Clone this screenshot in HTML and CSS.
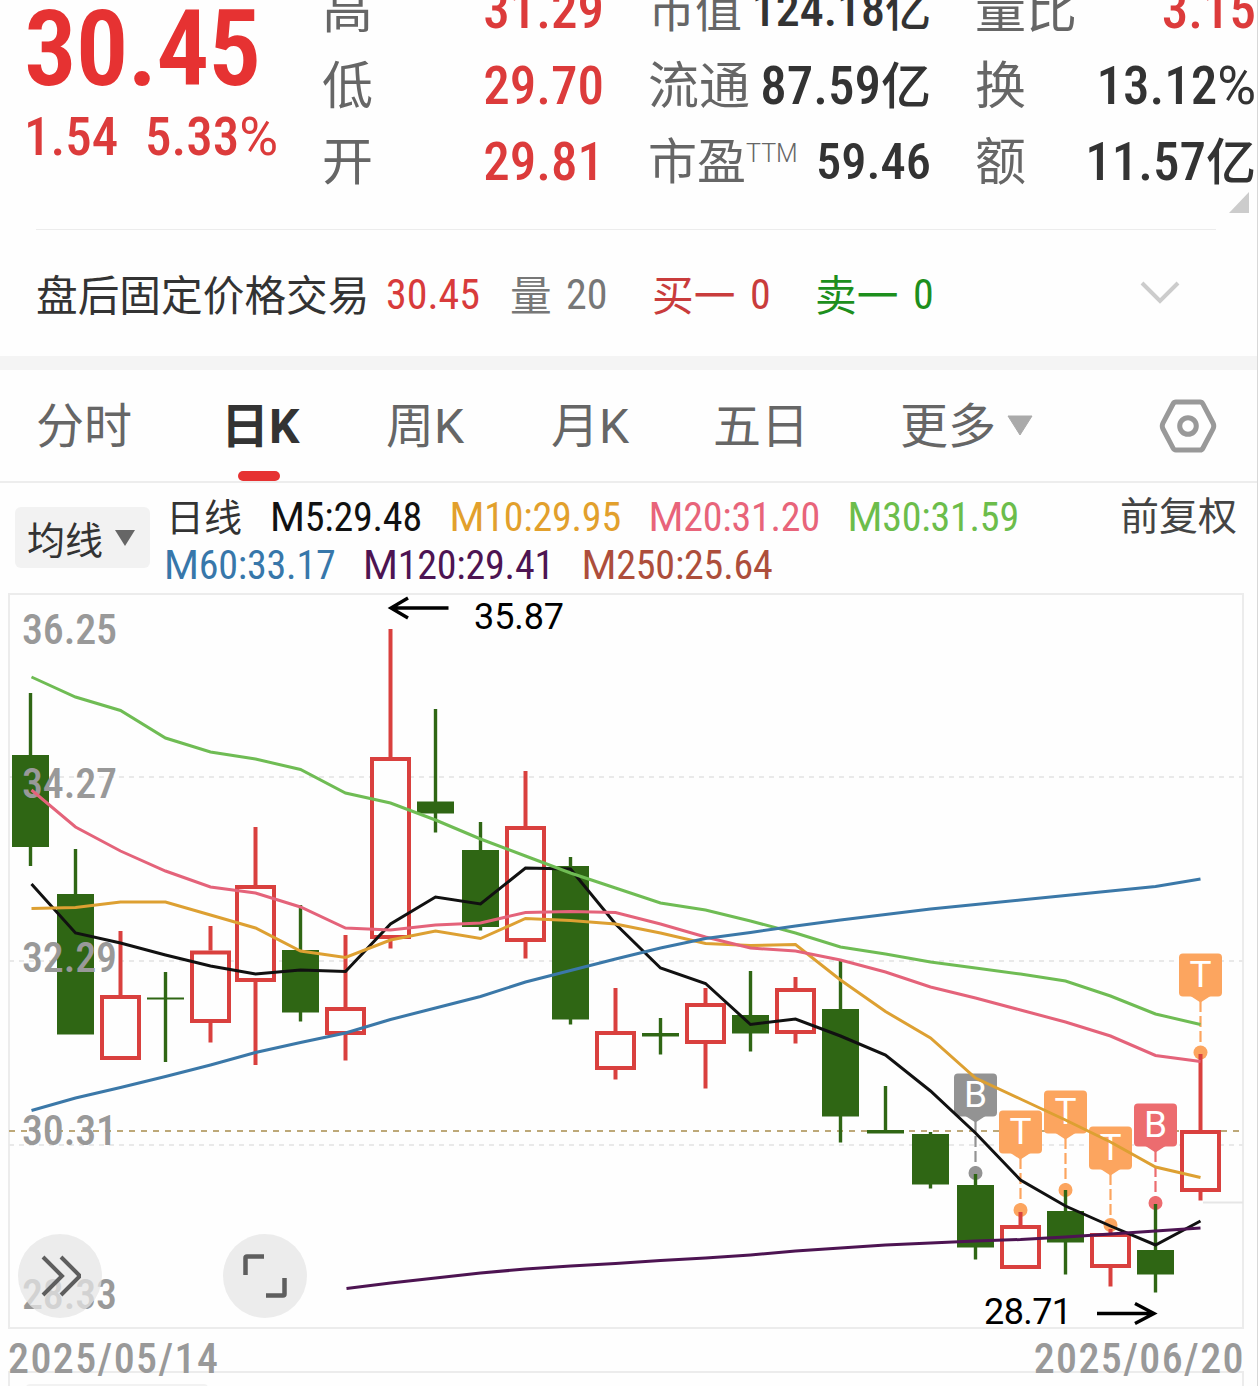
FILE: index.html
```html
<!doctype html>
<html lang="zh-CN">
  <head>
    <meta charset="UTF-8" />
    <meta name="viewport" content="width=device-width, initial-scale=1.0" />
    <title>日K</title>
    <link rel="stylesheet" href="styles.css">
  </head>
  <body>
    <!-- Quote -->
    <div class="quote">
      <div class="price-box">
        <div class="price">30.45</div>
        <div class="change"><span class="diff">1.54</span><span>5.33<b>%</b></span></div>
      </div>
      <div class="stats">
        <div class="stat"><span class="label">高</span><span class="value up">31.29</span></div>
        <div class="stat tight"><span class="label">市值</span><span class="value">124.18<i>亿</i></span></div>
        <div class="stat"><span class="label">量比</span><span class="value up">3.15</span></div>
        <div class="stat"><span class="label">低</span><span class="value up">29.70</span></div>
        <div class="stat"><span class="label">流通</span><span class="value">87.59<i>亿</i></span></div>
        <div class="stat"><span class="label">换</span><span class="value">13.12<b>%</b></span></div>
        <div class="stat"><span class="label">开</span><span class="value up">29.81</span></div>
        <div class="stat pe"><span class="label">市盈<sup>TTM</sup></span><span class="value">59.46</span></div>
        <div class="stat"><span class="label">额</span><span class="value">11.57<i>亿</i></span></div>
      </div>
      <svg class="corner" width="20" height="21" viewBox="0 0 20 21"><path d="M20 0V21H0Z" fill="#ccc"/></svg>
    </div>

    <!-- After hours -->
    <div class="after">
      <span class="after-title">盘后固定价格交易</span>
      <span class="num after-price">30.45</span>
      <span class="after-vol">量</span><span class="num after-volnum">20</span>
      <span class="bid">买一</span><span class="num bid-num">0</span>
      <span class="ask">卖一</span><span class="num ask-num">0</span>
      <svg class="chevron" width="40" height="24" viewBox="0 0 40 24"><path d="M2 2L20 20L38 2" fill="none" stroke="#ccc" stroke-width="4"/></svg>
    </div>

    <!-- Tabs -->
    <div class="tabs">
      <div class="tab">分时</div>
      <div class="tab active">日K</div>
      <div class="tab">周K</div>
      <div class="tab">月K</div>
      <div class="tab">五日</div>
      <div class="tab">更多<svg width="26" height="21" viewBox="0 0 26 21"><path d="M1 1H25L13 20Z" fill="#aaa" stroke="#aaa" stroke-linejoin="round"/></svg></div>
      <svg class="setting" width="58" height="56" viewBox="0 0 58 56"><path d="M17 4H41Q43 4 44 6L54 25Q55.5 28 54 31L44 50Q43 52 41 52H17Q15 52 14 50L4 31Q2.500 28 4 25L14 6Q15 4 17 4Z" fill="none" stroke="#999" stroke-width="5"/><circle cx="29" cy="28" r="8.300" fill="none" stroke="#999" stroke-width="5"/></svg>
    </div>

    <!-- Moving averages -->
    <div class="ma-bar">
      <div class="ma-btn">均线<svg width="20" height="16" viewBox="0 0 20 16"><path d="M0 0H20L10 16Z" fill="#666"/></svg></div>
      <div class="ma-list">
        <div class="ma-row">
          <span class="ma-name">日线</span>
          <span class="ma ma5"><b>M</b>5:29.48</span>
          <span class="ma ma10"><b>M</b>10:29.95</span>
          <span class="ma ma20"><b>M</b>20:31.20</span>
          <span class="ma ma30"><b>M</b>30:31.59</span>
        </div>
        <div class="ma-row">
          <span class="ma ma60"><b>M</b>60:33.17</span>
          <span class="ma ma120"><b>M</b>120:29.41</span>
          <span class="ma ma250"><b>M</b>250:25.64</span>
        </div>
      </div>
      <div class="adjust">前复权</div>
    </div>

    <!-- Chart -->
    <div class="chart">
      <svg id="kline" width="1258" height="738" viewBox="0 592 1258 738"></svg>
      <button class="round-btn expand"><svg width="42" height="42" viewBox="0 0 42 42"><path d="M4 2L23 21L4 40M22 2L41 21L22 40" fill="none" stroke="#5e5e5e" stroke-width="4"/></svg></button>
      <button class="round-btn full"><svg width="44" height="44" viewBox="0 0 44 44"><path d="M2.500 21V4Q2.500 2.500 4 2.500H21M41.500 24V40Q41.500 41.500 40 41.500H23" fill="none" stroke="#5e5e5e" stroke-width="4.500"/></svg></button>
    </div>
    <div class="dates"><span>2025/05/14</span><span>2025/06/20</span></div>
    <div class="sub-chart"><div class="sub-btn"></div></div>

    <script src="chart.js"></script>
  </body>
</html>
```
FILE: styles.css
```css
* {
  margin: 0;
  padding: 0;
  box-sizing: border-box;
}

body {
  width: 1258px;
  height: 1386px;
  overflow: hidden;
  background: #fefefe;
  border-right: 1px solid #d8d8d8;
  color: #333;
  font-family: Roboto, "Noto Sans CJK SC", sans-serif;
}

svg {
  display: block;
  flex: none;
}

/* quote */
.quote {
  position: relative;
  display: flex;
  height: 230px;
  margin-right: -1px;
  overflow: hidden;
}

.quote::after {
  content: "";
  position: absolute;
  left: 36px;
  right: 42px;
  bottom: 0;
  height: 1px;
  background: #ececec;
}

.price-box {
  width: 322px;
  flex: none;
  padding-left: 24px;
  color: #e63232;
  font-stretch: 87.5%;
}

.price {
  height: 99px;
  line-height: 99px;
  font-size: 105px;
  font-weight: 600;
  letter-spacing: -1px;
}

.change {
  display: flex;
  line-height: 76px;
  font-size: 53px;
  font-weight: 500;
  color: #dc3b3b;
}

.change b,
.value b {
  font-weight: 450;
  font-stretch: 100%;
}

.value b {
  font-stretch: 93%;
}

.diff {
  width: 121px;
}

.stats {
  display: grid;
  grid-template-columns: 282px 283px 281px;
  grid-template-rows: repeat(3, 76px);
  column-gap: 44px;
  margin-top: -28px;
}

.stat {
  display: flex;
  justify-content: space-between;
  white-space: nowrap;
  line-height: 76px;
  font-size: 51px;
}

.label {
  padding-top: 1px;
  color: #666;
}

.label sup {
  font-size: 25px;
  font-weight: 300;
  line-height: 0;
  vertical-align: 17px;
}

.value {
  font-size: 53px;
  font-weight: 500;
  font-stretch: 87.5%;
}

.value i {
  font-style: normal;
  font-size: 50px;
}

/* long values are shrunk to stay inside the column */
.tight {
  font-size: 47px;
}

.tight .value {
  font-size: 48px;
}

.tight .value i {
  font-size: 46px;
}

.pe {
  font-size: 49px;
}

.pe .value {
  font-size: 50.500px;
}

.up {
  color: #dc3b3b;
}

.corner {
  position: absolute;
  right: 9px;
  top: 192px;
}

/* after hours */
.after {
  display: flex;
  align-items: center;
  height: 126px;
  padding-left: 36px;
  font-size: 41.700px;
}

.num {
  font-size: 42px;
  font-weight: 450;
  font-stretch: 87.5%;
  padding-top: 2px;
}

.after-title {
  width: 350px;
}

.after-price {
  width: 124px;
  color: #d83b3b;
}

.after-vol {
  width: 56px;
  color: #777;
}

.after-volnum {
  width: 86px;
  color: #777;
}

.bid {
  width: 98px;
}

.bid,
.bid-num {
  color: #c93c3c;
}

.bid-num {
  width: 65px;
}

.ask {
  width: 98px;
}

.ask,
.ask-num {
  color: #1d8f1d;
}

.chevron {
  margin-left: auto;
  margin-right: 77px;
}

/* tabs */
.tabs {
  display: flex;
  align-items: center;
  height: 127px;
  padding-left: 36px;
  border-top: 14px solid #f4f4f4;
  border-bottom: 2px solid #ededed;
  font-size: 48px;
  color: #666;
}

.tab {
  position: relative;
  display: flex;
  align-items: center;
  gap: 11px;
  width: 165px;
  height: 111px;
  padding-top: 3px;
  line-height: 108px;
}

.tab svg {
  margin-top: -3px;
}

.tab:first-child {
  width: 185px;
}

.tab:nth-child(4) {
  width: 162px;
}

.tab:nth-child(5) {
  width: 187px;
}

.tab.active {
  gap: 0;
  color: #333;
  font-weight: 700;
}

.tab.active::after {
  content: "";
  position: absolute;
  left: 17px;
  bottom: 0;
  width: 42px;
  height: 10px;
  border-radius: 5px;
  background: #e63232;
}

.setting {
  margin-left: auto;
  margin-right: 40px;
}

/* moving averages */
.ma-bar {
  display: flex;
  height: 109px;
  padding: 10px 20px 0 15px;
}

.ma-btn {
  display: flex;
  align-items: center;
  gap: 12px;
  width: 135px;
  height: 61px;
  margin-top: 14px;
  padding-left: 12px;
  border-radius: 6px;
  background: #f2f2f2;
  font-size: 38px;
}

.ma-list {
  padding: 1px 0 0 14px;
}

.ma-row {
  display: flex;
  height: 48px;
  line-height: 48px;
}

.ma-name {
  width: 106px;
  padding-left: 2px;
  font-size: 38px;
}

.ma {
  padding-right: 27.500px;
  font-size: 40px;
  font-weight: 450;
  font-stretch: 87.5%;
  letter-spacing: -0.200px;
}

.ma b {
  font-weight: 450;
  font-stretch: 95%;
}

.ma5 { color: #111; }
.ma10 { color: #e2a02c; }
.ma20 { color: #e8647a; }
.ma30 { color: #6cbd4b; }
.ma60 { color: #3777aa; }
.ma120 { color: #4d1452; }
.ma250 { color: #ad4e3b; }

.adjust {
  margin-left: auto;
  line-height: 48px;
  font-size: 39px;
  color: #444;
}

/* chart */
.chart {
  position: relative;
  height: 738px;
}

.round-btn {
  position: absolute;
  top: 642px;
  display: flex;
  align-items: center;
  justify-content: center;
  width: 84px;
  height: 84px;
  border: none;
  border-radius: 50%;
  background: rgba(230, 230, 230, 0.75);
}

.expand {
  left: 18px;
}

.full {
  left: 223px;
}

.axis {
  font-size: 42px;
  font-weight: 500;
  font-stretch: 87.5%;
  fill: #999;
}

.peak {
  font-size: 36px;
  fill: #000;
}

.mark {
  font-size: 37px;
  fill: #fff;
  text-anchor: middle;
}

.dates {
  position: relative;
  z-index: 1;
  display: flex;
  justify-content: space-between;
  height: 41px;
  padding: 0 12px 0 8px;
  line-height: 57px;
  font-size: 42px;
  font-weight: 500;
  font-stretch: 87.5%;
  letter-spacing: 1.400px;
  color: #999;
}

.sub-chart {
  height: 30px;
  margin: 0 13px 0 8px;
  border: 2px solid #ececec;
}

.sub-btn {
  width: 182px;
  height: 20px;
  margin: 11px 0 0 16px;
  border-radius: 4px;
  background: #f2f2f2;
}
```
FILE: chart.js
```js
const kline = document.getElementById("kline");
const STEP = 45;
const UP = "#d9403e";
const DOWN = "#2f6614";

// open/close top, bottom, high, low, rising
const candles = [
  [755, 847, 693, 866, 0],
  [894, 1034.5, 849, 1034, 0],
  [995, 1060, 931, 1060, 1],
  [997.5, 999.5, 972, 1062, 0],
  [950.5, 1023, 926, 1042.5, 1],
  [885, 982, 827, 1065, 1],
  [950, 1012.5, 905, 1021.5, 0],
  [1007, 1035, 935, 1060.5, 1],
  [757, 939, 629, 948.5, 1],
  [801.5, 813.5, 709, 832.5, 0],
  [850, 927, 822, 930.5, 0],
  [826, 942, 771, 958.5, 1],
  [866, 1019.5, 857, 1024.5, 0],
  [1031, 1070, 988, 1079.5, 1],
  [1033, 1036.5, 1018, 1054.5, 0],
  [1003, 1044, 988, 1088.5, 1],
  [1015, 1033.5, 971, 1051.5, 0],
  [988, 1034, 977, 1043.5, 1],
  [1009, 1116.5, 961, 1142.5, 0],
  [1130, 1133.5, 1086, 1133, 0],
  [1134, 1184.5, 1132, 1188.5, 0],
  [1185, 1247.5, 1174, 1259.5, 0],
  [1225, 1269, 1212, 1269, 1],
  [1211, 1242.5, 1190, 1274.5, 0],
  [1233, 1268, 1229, 1286.5, 1],
  [1250, 1274.5, 1204, 1292.5, 0],
  [1130, 1192, 1054, 1200.5, 1],
];

const lines = [
  { color: "#111111", from: 0, y: [884, 933, 943, 955, 966, 974, 970, 971.5, 924, 897, 904, 868, 869, 924, 968, 983.5, 1024.5, 1019, 1036, 1055, 1091, 1133, 1180, 1206, 1226, 1245, 1221] },
  { color: "#dda032", from: 0, y: [908.5, 907.5, 902, 902, 915, 928, 951, 957.5, 940, 931, 938.5, 918.5, 920.5, 924, 933, 943.5, 945.5, 944.5, 980, 1011.5, 1038, 1078, 1099, 1120, 1142, 1167, 1177.5] },
  { color: "#e4637a", from: 0, y: [790, 827, 851, 871, 887, 893, 907, 928, 930, 925, 923, 912.5, 911.5, 912.5, 924, 937, 948, 951, 960, 972, 987, 998, 1010, 1022, 1036, 1055.5, 1061.5] },
  { color: "#6fbc54", from: 0, y: [677, 697, 710.5, 738, 752, 759, 769.5, 793, 803, 820, 839, 856, 873, 888, 903, 910, 921, 933, 947, 954, 962, 968, 974, 981, 996, 1014, 1024.5] },
  { color: "#3b78a8", from: 0, y: [1110.5, 1098, 1087.5, 1076.5, 1065, 1052.5, 1042.5, 1033, 1019.5, 1008, 996.5, 982, 970.5, 959, 948, 938.5, 932.5, 926, 920, 914.5, 909, 904.5, 900, 895.5, 891, 886.5, 879] },
  { color: "#4d1452", from: 7, y: [1288.5, 1283, 1278, 1273, 1269, 1266, 1263.5, 1260.5, 1258, 1255, 1251, 1248, 1245, 1243, 1241, 1239.5, 1237, 1234, 1231, 1228] },
];

// candle index, letter, top of box, dot, color
const marks = [
  [21, "B", 1074, 1173, "#939393"],
  [22, "T", 1111, 1210, "#fca55f"],
  [23, "T", 1091, 1190, "#fca55f"],
  [24, "T", 1127, 1225, "#fca55f"],
  [25, "B", 1104, 1203, "#ec6c6f"],
  [26, "T", 954, 1052.5, "#fca55f"],
];

const cx = (i) => 30.5 + i * STEP;
let out = "";

// frame and grid
out += `<rect x="9" y="594" width="1234" height="734" fill="none" stroke="#ececec" stroke-width="2"/>`;
[777, 961, 1145].forEach((y) => {
  out += `<path d="M9 ${y}H1243" stroke="#e9e9e9" stroke-width="2" stroke-dasharray="5 5"/>`;
});
out += `<path d="M9 1131H1239" stroke="#bda878" stroke-width="1.8" stroke-dasharray="6 6"/>`;
out += `<path d="M1203 1202.500H1243" stroke="#e6e6e6" stroke-width="2"/>`;

marks.forEach(([i, letter, top, dot, color]) => {
  const x = cx(i);
  out += `<path d="M${x} ${top + 47}V${dot}" stroke="${color}" stroke-width="2.2" stroke-dasharray="11 4"/>`;
  out += `<rect x="${x - 21.5}" y="${top - 0.5}" width="43" height="43" rx="4" fill="${color}"/>`;
  out += `<path d="M${x - 10} ${top + 42}L${x} ${top + 48.5}L${x + 10} ${top + 42}Z" fill="${color}"/>`;
  out += `<circle cx="${x}" cy="${dot}" r="7" fill="${color}"/>`;
  out += `<text class="mark" x="${x}" y="${top + 33}">${letter}</text>`;
});

candles.forEach(([top, bottom, high, low, rising], i) => {
  const x = cx(i);
  if (rising) {
    out += `<path d="M${x} ${high}V${top}M${x} ${bottom}V${low}" stroke="${UP}" stroke-width="4"/>`;
    out += `<rect x="${x - 18.5}" y="${top + 2}" width="37" height="${bottom - top - 4}" fill="#fefefe" stroke="${UP}" stroke-width="4"/>`;
  } else {
    out += `<path d="M${x} ${high}V${low}" stroke="${DOWN}" stroke-width="3.4"/>`;
    out += `<rect x="${x - 18.5}" y="${top}" width="37" height="${bottom - top}" fill="${DOWN}"/>`;
  }
});

["36.25", "34.27", "32.29", "30.31", "28.33"].forEach((t, i) => {
  const y = [644, 798, 972, 1145, 1309][i];
  out += `<text class="axis" x="22" y="${y}" textLength="95">${t}</text>`;
});

lines.forEach(({ color, from, y }) => {
  const pts = y.map((v, k) => `${cx(k + from) + (k ? 0 : 1)},${v}`).join(" ");
  out += `<polyline points="${pts}" fill="none" stroke="${color}" stroke-width="3"/>`;
});

// highest and lowest price
out += `<path d="M448.500 608H392M408 598L391 608L408 618" fill="none" stroke="#000" stroke-width="3.4"/>`;
out += `<text class="peak" x="474" y="628.500" textLength="90">35.87</text>`;
out += `<path d="M1097 1313.500H1153M1135 1303.500L1154 1313.500L1135 1323.500" fill="none" stroke="#000" stroke-width="3.4"/>`;
out += `<text class="peak" x="984" y="1324" textLength="88">28.71</text>`;

kline.innerHTML = out;
```
